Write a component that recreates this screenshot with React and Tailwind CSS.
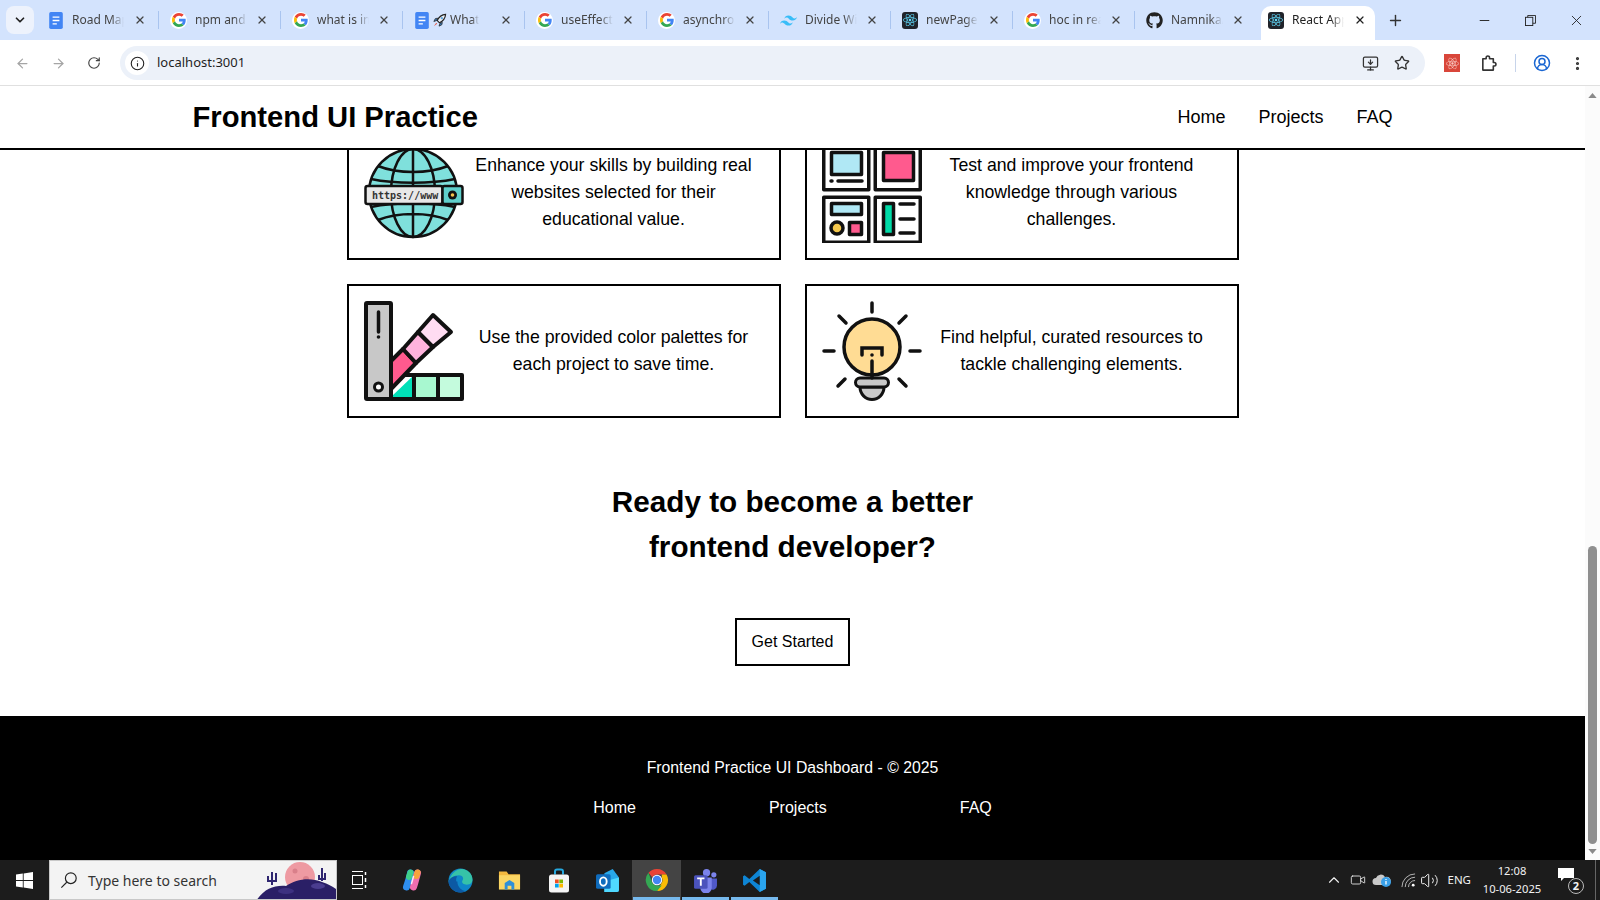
import React from "react";
import {
  ArrowLeft,
  ArrowRight,
  RotateCw,
  Info,
  Star,
  CircleUserRound,
  EllipsisVertical,
  X,
  Plus,
  Minus,
  ChevronDown,
  ChevronUp,
  Volume2,
  MonitorDown,
  Video,
} from "lucide-react";
import { FaGithub, FaReact } from "react-icons/fa";

const GoogleIcon = () => (
  <span className="w-[17px] h-[17px] rounded-full bg-white flex items-center justify-center shrink-0">
    <svg viewBox="0 0 48 48" className="w-[14px] h-[14px]">
      <path fill="#EA4335" d="M24 9.5c3.54 0 6.71 1.22 9.21 3.6l6.85-6.85C35.9 2.38 30.47 0 24 0 14.62 0 6.51 5.38 2.56 13.22l7.98 6.19C12.43 13.72 17.74 9.5 24 9.5z" />
      <path fill="#4285F4" d="M46.98 24.55c0-1.57-.15-3.09-.38-4.55H24v9.02h12.94c-.58 2.96-2.26 5.48-4.78 7.18l7.73 6c4.51-4.18 7.09-10.36 7.09-17.65z" />
      <path fill="#FBBC05" d="M10.53 28.59c-.48-1.45-.76-2.99-.76-4.59s.27-3.14.76-4.59l-7.98-6.19C.92 16.46 0 20.12 0 24c0 3.88.92 7.54 2.56 10.78l7.97-6.19z" />
      <path fill="#34A853" d="M24 48c6.48 0 11.93-2.13 15.89-5.81l-7.73-6c-2.15 1.45-4.92 2.3-8.16 2.3-6.26 0-11.57-4.22-13.47-9.91l-7.98 6.19C6.51 42.62 14.62 48 24 48z" />
    </svg>
  </span>
);

const DocsIcon = () => (
  <svg viewBox="0 0 16 20" className="w-[16px] h-[17px] shrink-0">
    <rect width="16" height="20" rx="2" fill="#4285f4" />
    <path d="M4 6h8M4 10h8M4 14h5" stroke="#fff" strokeWidth="1.6" />
  </svg>
);

const RocketIcon = () => (
  <svg viewBox="0 0 16 16" className="w-[15px] h-[15px] shrink-0 ml-[2px]">
    <path d="M14.5 1.5c-4 .3-7 2.5-9 6.5l2.5 2.5c4-2 6.2-5 6.5-9z" fill="#e8eef5" stroke="#222" strokeWidth="1.2" />
    <path d="M5 8 2 9l1.5-3L6 5.5zM8.5 11 7.5 14l3-1.5.5-2.5z" fill="#3b82c4" stroke="#222" strokeWidth=".8" />
    <path d="M4.500 10.500 2 14l3.500-2.500z" fill="#e5533d" />
    <circle cx="10.5" cy="5.5" r="1.2" fill="#5aa5e0" />
  </svg>
);

const TailwindIcon = () => (
  <svg viewBox="0 0 24 24" className="w-[17px] h-[17px] shrink-0">
    <path
      fill="#38bdf8"
      d="M12.001 4.800c-3.200 0-5.200 1.600-6 4.800 1.200-1.600 2.600-2.200 4.200-1.800.913.228 1.565.89 2.288 1.624C13.666 10.618 15.027 12 18.001 12c3.200 0 5.200-1.600 6-4.800-1.200 1.600-2.600 2.200-4.200 1.800-.913-.228-1.565-.89-2.288-1.624C16.337 6.182 14.976 4.800 12.001 4.800zm-6 7.200c-3.200 0-5.200 1.600-6 4.800 1.200-1.600 2.600-2.200 4.200-1.800.913.228 1.565.89 2.288 1.624 1.177 1.194 2.538 2.576 5.512 2.576 3.200 0 5.200-1.600 6-4.800-1.200 1.600-2.600 2.200-4.200 1.800-.913-.228-1.565-.89-2.288-1.624C10.337 13.382 8.976 12 6.001 12z"
    />
  </svg>
);

const ReactIcon = () => (
  <span className="w-[16px] h-[17px] rounded-[3px] bg-[#20232a] flex items-center justify-center shrink-0">
    <FaReact size={14} className="text-[#61dafb]" />
  </span>
);

const tabs = [
  { title: "Road Map", icon: <DocsIcon /> },
  { title: "npm and", icon: <GoogleIcon /> },
  { title: "what is in", icon: <GoogleIcon /> },
  { title: "What", icon: <DocsIcon />, rocket: true },
  { title: "useEffect", icon: <GoogleIcon /> },
  { title: "asynchron", icon: <GoogleIcon /> },
  { title: "Divide Wi", icon: <TailwindIcon /> },
  { title: "newPage", icon: <ReactIcon /> },
  { title: "hoc in rea", icon: <GoogleIcon /> },
  { title: "Namnika/", icon: <FaGithub size={17} className="text-[#222] shrink-0" />, last: true },
];

const TabStrip = () => (
  <div className="h-[40px] shrink-0 bg-[#d3e3fd] flex items-end font-['Noto_Sans',sans-serif] text-[12px] text-[#444]">
    <div className="w-[28px] h-[28px] ml-[6px] mr-[3px] mb-[6px] rounded-lg bg-[#edf2fc] flex items-center justify-center">
      <ChevronDown size={14} strokeWidth={3} className="text-[#222]" />
    </div>
    {tabs.map((tab) => (
      <div key={tab.title} className="relative w-[122px] h-[34px] pb-[6px] pl-[11px] flex items-center shrink-0">
        {tab.icon}
        {tab.rocket && <RocketIcon />}
        <span className={`${tab.rocket ? "ml-[3px] w-[29px]" : "ml-[8px] w-[52px]"} overflow-hidden whitespace-nowrap [mask-image:linear-gradient(to_right,black_75%,transparent)]`}>
          {tab.title}
        </span>
        <X size={12} strokeWidth={2.5} className="absolute left-[97px] top-[8px] text-[#444]" />
        {!tab.last && <span className="absolute right-0 top-[5px] w-[1px] h-[18px] bg-[#a9c4ef]" />}
      </div>
    ))}
    <div className="relative w-[114px] h-[34px] ml-[4px] pb-[6px] pl-[7px] flex items-center shrink-0 bg-white rounded-t-[10px] text-[#222]">
      <ReactIcon />
      <span className="ml-[8px] w-[52px] overflow-hidden whitespace-nowrap [mask-image:linear-gradient(to_right,black_75%,transparent)]">
        React App
      </span>
      <X size={12} strokeWidth={2.5} className="absolute left-[93px] top-[8px] text-[#222]" />
    </div>
    <Plus size={17} strokeWidth={2} className="ml-[12px] mb-[11px] text-[#333]" />
    <div className="ml-auto flex items-center h-[40px] text-[#222]">
      <Minus size={15} strokeWidth={1.5} className="mr-[33px]" />
      <svg viewBox="0 0 12 12" className="w-[11px] h-[11px] mr-[32px]" fill="none" stroke="currentColor">
        <rect x=".5" y="2.5" width="8" height="9" />
        <path d="M3 2.5V.5h8.500V9H8.500" />
      </svg>
      <X size={17} strokeWidth={1.25} className="mr-[15px]" />
    </div>
  </div>
);

const ExtensionIcon = () => (
  <span className="w-[16px] h-[18px] bg-[#d9463a] flex items-center justify-center">
    <FaReact size={13} className="text-[#f7c9c2]" />
  </span>
);

const PuzzleIcon = () => (
  <svg viewBox="0 0 18 18" className="ml-[20px] w-[17px] h-[17px]" fill="none" stroke="#333" strokeWidth="1.7" strokeLinejoin="round">
    <path d="M3 4h3.500V2.800a1.800 1.800 0 0 1 3.600 0V4h4v4h1a1.800 1.800 0 0 1 0 3.600h-1V16H3z" />
  </svg>
);

const Toolbar = () => (
  <div className="h-[46px] shrink-0 bg-white border-b border-[#e0e0e0] flex items-start pt-[6px] font-['Noto_Sans',sans-serif]">
    <div className="w-[120px] h-[34px] pl-[15px] flex items-center">
      <ArrowLeft size={15} strokeWidth={2} className="text-[#a5a5a5]" />
      <ArrowRight size={15} strokeWidth={2} className="ml-[21px] text-[#a5a5a5]" />
      <RotateCw size={14} strokeWidth={2} className="ml-[21px] text-[#444]" />
    </div>
    <div className="w-[1305px] h-[34px] rounded-full bg-[#ecf1f9] flex items-center pl-[5px] pr-[15px]">
      <span className="w-[24px] h-[24px] rounded-full bg-white flex items-center justify-center">
        <Info size={15} strokeWidth={1.75} className="text-[#222]" />
      </span>
      <span className="ml-[8px] text-[13px] text-[#1f1f1f]">localhost:3001</span>
      <MonitorDown size={17} strokeWidth={1.75} className="ml-auto text-[#333]" />
      <Star size={16} strokeWidth={2} className="ml-[15px] text-[#333]" />
    </div>
    <div className="h-[34px] flex items-center flex-1">
      <span className="ml-[19px]"><ExtensionIcon /></span>
      <PuzzleIcon />
      <span className="ml-[18px] w-[1px] h-[18px] bg-[#c7d4ea]" />
      <CircleUserRound size={18} strokeWidth={2} className="ml-[17px] text-[#1a66d2]" />
      <EllipsisVertical size={17} strokeWidth={2.5} className="ml-[18px] text-[#333]" />
    </div>
  </div>
);

const GlobeArt = () => (
  <svg viewBox="0 0 100 100" className="w-[100px] h-[100px] shrink-0">
    <circle cx="49" cy="50" r="44" fill="#7fe0dc" />
    <path d="M87 28a44 44 0 0 1-8 54 50 50 0 0 0 8-54z" fill="#2fb9b5" />
    <g fill="none" stroke="#111" strokeWidth="2.5">
      <circle cx="49" cy="50" r="44" />
      <ellipse cx="49" cy="50" rx="22" ry="44" />
      <path d="M49 6v88M14 23c20 8 50 8 70 0M14 77c20-8 50-8 70 0M7 36c24 5 60 5 84 0M7 64c24-5 60-5 84 0" />
    </g>
    <rect x="1.5" y="43" width="77" height="18" rx="2" fill="#e8e8e8" stroke="#111" strokeWidth="2.5" />
    <rect x="78.5" y="43" width="20" height="18" rx="2" fill="#5fd0cc" stroke="#111" strokeWidth="2.5" />
    <circle cx="88.5" cy="52" r="4.5" fill="#111" />
    <circle cx="88.5" cy="52" r="1.8" fill="#f3c24c" />
    <text x="8" y="55.500" fontFamily="'DejaVu Sans Mono', monospace" fontWeight="700" fontSize="10" fill="#333">https://www</text>
  </svg>
);

const BoardArt = () => (
  <svg viewBox="0 0 100 100" className="w-[100px] h-[100px] shrink-0">
    <g fill="#fff" stroke="#111" strokeWidth="3.5" strokeLinejoin="round">
      <rect x="1.75" y="1.75" width="45" height="45" />
      <rect x="53.25" y="1.75" width="45" height="45" />
      <rect x="1.75" y="54.25" width="45" height="45" />
      <rect x="53.25" y="54.25" width="45" height="45" />
      <rect x="9.5" y="9.5" width="30" height="22" fill="#b0e8f5" />
      <rect x="61.5" y="9.5" width="30" height="28" fill="#ff5a8e" />
      <rect x="9.5" y="60.5" width="30" height="11" fill="#b0e8f5" />
      <circle cx="15" cy="85" r="6" fill="#f5c84c" />
      <rect x="27.5" y="79.5" width="12" height="12" fill="#ff5a8e" />
      <rect x="61.5" y="60.5" width="10" height="31" fill="#00dca8" />
    </g>
    <path d="M9 38h1M16 38h24M78 61h14M78 76h14M78 90h14" stroke="#111" strokeWidth="3.5" strokeLinecap="round" />
  </svg>
);

const PaletteArt = () => (
  <svg viewBox="0 0 100 100" className="w-[100px] h-[100px] shrink-0">
    <path d="M50 74v24H27v-2z" fill="#00e0b8" />
    <g stroke="#111" strokeWidth="4" strokeLinejoin="round">
      <rect x="50" y="74" width="24" height="24" fill="#a8f8d0" />
      <rect x="74" y="74" width="24" height="24" fill="#c4fbdd" />
      <path d="M50 74H27v24h23z" fill="none" />
      <path d="M27 60 39 48 52 62 27 88z" fill="#ff5a8e" />
      <path d="M39 48 54 31 69 46 52 62z" fill="#ffb3dd" />
      <path d="M54 31 69 14 87 31 69 46z" fill="#ffdcf2" />
      <rect x="2" y="2" width="25" height="96" rx="1" fill="#c8c8c8" />
    </g>
    <path d="M14.5 11v20" stroke="#111" strokeWidth="3.5" strokeLinecap="round" />
    <circle cx="14.5" cy="36" r="1.8" fill="#111" />
    <circle cx="14.5" cy="86" r="4" fill="#fff" stroke="#111" strokeWidth="3" />
  </svg>
);

const BulbArt = () => (
  <svg viewBox="0 0 100 100" className="w-[100px] h-[100px] shrink-0">
    <path d="M38 86h24a12 12.500 0 0 1-24 0z" fill="#c8c8c8" stroke="#111" strokeWidth="3" />
    <circle cx="50" cy="46" r="28" fill="#ffdc94" stroke="#111" strokeWidth="3.5" />
    <rect x="33.5" y="77" width="33" height="9" rx="4.5" fill="#c8c8c8" stroke="#111" strokeWidth="3" />
    <path
      d="M50 2v9M2 50h10M88 50h10M17 15l7 7M84 15l-7 7M16 85l7-7M84 85l-7-7M40 54v-7h20v7M50 60v17"
      fill="none"
      stroke="#111"
      strokeWidth="3.5"
      strokeLinecap="round"
    />
    <circle cx="50" cy="54" r="1.8" fill="#111" />
  </svg>
);

const features = [
  { art: <GlobeArt />, text: "Enhance your skills by building real websites selected for their educational value.", threeLines: true },
  { art: <BoardArt />, text: "Test and improve your frontend knowledge through various challenges.", threeLines: true },
  { art: <PaletteArt />, text: "Use the provided color palettes for each project to save time." },
  { art: <BulbArt />, text: "Find helpful, curated resources to tackle challenging elements." },
];

const FeatureCard = ({ art, text, threeLines }) => (
  <div className="border-2 border-black p-[15px] flex items-center">
    {art}
    <p className={`flex-1 px-2 text-center text-[17.7px] leading-[27px] ${threeLines ? "pb-[1px]" : ""}`}>{text}</p>
  </div>
);

const Page = () => (
  <div className="flex-1 min-h-0 flex">
    <div className="flex-1 min-w-0 flex flex-col font-['Liberation_Sans',Arial,sans-serif] text-black bg-white">
      <header className="h-[64px] shrink-0 border-b-2 border-black">
        <div className="w-[1200px] h-full mx-auto flex items-center justify-between">
          <h1 className="pt-[2px] text-[29.2px] font-bold">Frontend UI Practice</h1>
          <nav className="flex gap-[33px] text-[18px]">
            <a>Home</a>
            <a>Projects</a>
            <a>FAQ</a>
          </nav>
        </div>
      </header>
      <div className="flex-1 min-h-0 overflow-hidden">
        {/* page is scrolled, first row sits partly under the header */}
        <div className="-mt-[24px] flex flex-col items-center">
          <div className="w-[892px] grid grid-cols-2 gap-[24px]">
            {features.map((f) => (
              <FeatureCard key={f.text} art={f.art} text={f.text} threeLines={f.threeLines} />
            ))}
          </div>
          <h2 className="mt-[61px] text-[29.7px] leading-[45px] font-bold text-center">
            Ready to become a better
            <br />
            frontend developer?
          </h2>
          <button className="mt-[49px] w-[115px] h-[48px] border-2 border-black text-[16px]">Get Started</button>
        </div>
        <footer className="mt-[50px] h-[144px] bg-black text-white text-[15.8px] leading-[24px] pt-[40px] flex flex-col items-center">
          <p>Frontend Practice UI Dashboard - © 2025</p>
          <div className="mt-[16px] flex gap-[133px] text-[16px]">
            <a>Home</a>
            <a>Projects</a>
            <a>FAQ</a>
          </div>
        </footer>
      </div>
    </div>
    <div className="w-[15px] shrink-0 bg-[#fbfbfb] flex flex-col items-center pt-[7px] pb-[6px]">
      <svg viewBox="0 0 10 6" className="w-[9px] h-[5px] fill-[#8a8a8a]"><path d="M5 0l5 6H0z" /></svg>
      <div className="mt-auto w-[9px] h-[298px] rounded-full bg-[#8f8f8f]" />
      <svg viewBox="0 0 10 6" className="mt-[5px] w-[9px] h-[5px] fill-[#8a8a8a]"><path d="M5 6l5-6H0z" /></svg>
    </div>
  </div>
);

const WindowsLogo = () => (
  <svg viewBox="0 0 20 20" className="w-[17px] h-[17px] fill-white">
    <path d="M0 3l8-1.100V9.500H0zM9 1.700 20 0v9.500H9zM0 10.500h8v7.600l-8-1.100zM9 10.500h11V20L9 18.300z" />
  </svg>
);

const SearchBox = () => (
  <div className="w-[288px] h-full bg-[#f3f3f3] border border-[#c8c8c8] flex items-center relative overflow-hidden">
    <svg viewBox="0 0 20 20" className="ml-[10px] w-[18px] h-[18px]" fill="none" stroke="#222" strokeWidth="1.3">
      <circle cx="12" cy="8" r="6" />
      <path d="M7.500 12.500 1.500 18.500" />
    </svg>
    <span className="ml-[10px] text-[14px] text-[#333] font-['Noto_Sans',sans-serif] whitespace-nowrap">Type here to search</span>
    <svg viewBox="0 0 80 40" className="absolute right-0 top-0 w-[80px] h-[40px]">
      <circle cx="44" cy="16" r="15" fill="#ee9aa2" />
      <circle cx="39" cy="10" r="2.5" fill="#d97f8a" />
      <circle cx="50" cy="18" r="3" fill="#d97f8a" />
      <path d="M16 24v-13M12 15v5h8v-8" stroke="#2f2670" strokeWidth="2" fill="none" />
      <path d="M66 20V7M63 14v4h6v-6" stroke="#2f2670" strokeWidth="2" fill="none" />
      <path d="M0 40c8-12 18-16 30-15 10-7 24-9 36-4 6 2 10 4 14 7v12z" fill="#2a1f66" />
      <ellipse cx="62" cy="25" rx="7" ry="3" fill="#4a3d8f" />
      <ellipse cx="30" cy="30" rx="8" ry="3" fill="#3d3180" />
    </svg>
  </div>
);

const ChromeLogo = () => (
  <svg viewBox="0 0 24 24" className="w-[24px] h-[24px]">
    <path d="M12 1a11 11 0 0 1 9.530 5.500H12a5.500 5.500 0 0 0-4.760 2.750L3.500 4.800A11 11 0 0 1 12 1z" fill="#ea4335" />
    <path d="M21.530 6.500A11 11 0 0 1 12 23l4.760-8.250A5.500 5.500 0 0 0 16.760 9.250L16.760 6.500z" fill="#fbbc05" />
    <path d="M12 23A11 11 0 0 1 3.500 4.800l3.740 9.950A5.500 5.500 0 0 0 12 17.500h4.760L12 23z" fill="#34a853" />
    <circle cx="12" cy="12" r="5.2" fill="#fff" />
    <circle cx="12" cy="12" r="4.2" fill="#4285f4" />
  </svg>
);

const CopilotLogo = () => (
  <svg viewBox="0 0 24 24" className="w-[24px] h-[24px]" fill="none" strokeLinecap="round">
    <defs>
      <linearGradient id="copLeft" x1="0" y1="0" x2="0" y2="1">
        <stop offset="0" stopColor="#3fd08a" />
        <stop offset="0.5" stopColor="#2e8ef0" />
        <stop offset="1" stopColor="#2266d8" />
      </linearGradient>
      <linearGradient id="copRight" x1="0" y1="0" x2="0" y2="1">
        <stop offset="0" stopColor="#f6a33c" />
        <stop offset="0.5" stopColor="#ef6db0" />
        <stop offset="1" stopColor="#b45ce0" />
      </linearGradient>
    </defs>
    <path d="M10.500 5C10 9 8 14 6.500 19" stroke="#2e8ef0" strokeWidth="7" />
    <path d="M10.500 4.500 9 9" stroke="#3fd08a" strokeWidth="6" />
    <path d="M17.500 5C16 10 15 15 13.500 19" stroke="#ef6db0" strokeWidth="7" />
    <path d="M17.500 4.500 16.500 8" stroke="#f6a33c" strokeWidth="6" />
    <path d="M13.500 8.500 11.500 15.500" stroke="#fbe9f2" strokeWidth="1.5" />
  </svg>
);

const taskIcons = [
  { key: "copilot", node: <CopilotLogo /> },
  {
    key: "edge",
    node: (
      <svg viewBox="0 0 24 24" className="w-[25px] h-[25px]">
        <circle cx="12" cy="12" r="11.5" fill="#0f87c9" />
        <path d="M1 13C2 6 8 1 13 1c6 0 10.500 5 10.500 10 0 3-2 5-5.500 5-3 0-4.500-1.500-4.500-3 0-1 1-1.500 1-3 0-2-2-3-4-3-5 0-9 3-10 6z" fill="#36c2a8" />
        <path d="M9 13c0 5 4 9 8 9l2-.8A11.500 11.500 0 0 1 12 23.500C5 23.500.5 18 .5 13 2 9 6 7.500 9 8c-1 1-1.500 3-1 5z" fill="#0c59a4" />
      </svg>
    ),
  },
  {
    key: "files",
    node: (
      <svg viewBox="0 0 24 24" className="w-[23px] h-[24px]">
        <path d="M1 3h8l2 3h12v15H1z" fill="#f4b93f" />
        <rect x="1" y="7" width="22" height="15" fill="#fbd664" />
        <path d="M7 22v-7l5-3 5 3v7h-3v-4h-4v4z" fill="#2f8fd8" />
      </svg>
    ),
  },
  {
    key: "store",
    node: (
      <svg viewBox="0 0 24 24" className="w-[24px] h-[25px]">
        <path d="M8 6V3a2 2 0 0 1 2-2h4a2 2 0 0 1 2 2v3" fill="none" stroke="#25a9e0" strokeWidth="2" />
        <rect x="2" y="6" width="20" height="18" rx="2.5" fill="#f5f5f5" />
        <rect x="8" y="11" width="3.7" height="3.7" fill="#f25022" />
        <rect x="12.3" y="11" width="3.7" height="3.7" fill="#7fba00" />
        <rect x="8" y="15.3" width="3.7" height="3.7" fill="#00a4ef" />
        <rect x="12.3" y="15.3" width="3.7" height="3.7" fill="#ffb900" />
      </svg>
    ),
  },
  {
    key: "outlook",
    node: (
      <svg viewBox="0 0 24 24" className="w-[25px] h-[25px]">
        <path d="M9 5l8-4 6 8v12a2 2 0 0 1-2 2H9z" fill="#28a8ea" />
        <path d="M9 13l14-4v12a2 2 0 0 1-2 2H9z" fill="#50d9ff" />
        <rect x="1" y="6" width="14" height="14" rx="1.5" fill="#0f6cbd" />
        <ellipse cx="8" cy="13" rx="3.2" ry="4" fill="none" stroke="#fff" strokeWidth="1.8" />
      </svg>
    ),
  },
  { key: "chrome", node: <ChromeLogo />, active: true, open: true },
  {
    key: "teams",
    node: (
      <svg viewBox="0 0 24 24" className="w-[25px] h-[25px]">
        <circle cx="20" cy="6.5" r="2.5" fill="#7b83eb" />
        <circle cx="13" cy="4.5" r="3.5" fill="#7b83eb" />
        <path d="M16 10h7v7a4 4 0 0 1-7 2.500z" fill="#5059c9" />
        <path d="M7 9h11v10a5 5 0 0 1-11 0z" fill="#7b83eb" />
        <rect x="1" y="7" width="13" height="13" rx="1.5" fill="#4b53bc" />
        <path d="M4 10h7M7.500 10v7" stroke="#fff" strokeWidth="1.8" />
      </svg>
    ),
    open: true,
  },
  {
    key: "vscode",
    node: (
      <svg viewBox="0 0 24 24" className="w-[25px] h-[25px]">
        <path d="M17 1l6 3v16l-6 3-10-9.500L2.500 17 1 16v-8l1.500-1L7 10.500z" fill="#0e85d4" />
        <path d="M17 1l6 3v16l-6 3z" fill="#2aa4ee" />
        <path d="M17 7.500 10.500 12l6.500 4.500z" fill="#1c1c1c" />
      </svg>
    ),
    open: true,
  },
];

const Taskbar = () => (
  <div className="h-[40px] shrink-0 bg-[#1c1c1c] flex items-center text-white font-['Noto_Sans',sans-serif]">
    <div className="w-[49px] flex justify-center">
      <WindowsLogo />
    </div>
    <SearchBox />
    <div className="w-[45px] flex justify-center">
      <svg viewBox="0 0 16 18" className="w-[16px] h-[18px]" fill="none" stroke="#fff" strokeWidth="1">
        <path d="M0 .500h11M0 17.500h11" />
        <rect x=".5" y="4.5" width="10" height="9" />
        <path d="M13.500 1v3M13.500 7v4M13.500 14v3" strokeWidth="1.5" />
      </svg>
    </div>
    <div className="flex h-full ml-[5px]">
      {taskIcons.map((item) => (
        <div
          key={item.key}
          className={`relative w-[49px] h-full flex items-center justify-center ${item.active ? "bg-[#444]" : ""}`}
        >
          {item.node}
          {item.open && <span className="absolute bottom-0 inset-x-[1px] h-[3px] bg-[#76b9ed]" />}
        </div>
      ))}
    </div>
    <div className="ml-auto flex items-center h-full text-[#f2f2f2]">
      <ChevronUp size={18} strokeWidth={1.5} />
      <Video size={16} strokeWidth={1.25} className="ml-[7px]" />
      <svg viewBox="0 0 20 16" className="ml-[6px] w-[20px] h-[16px]">
        <path d="M4 13a3.500 3.500 0 0 1 0-7 5 5 0 0 1 9-1 4 4 0 0 1 3 8z" fill="#c9c9c9" />
        <circle cx="14" cy="10" r="5" fill="#3aa0e8" />
        <path d="M14 9v3.500M14 7v1" stroke="#fff" strokeWidth="1.3" />
      </svg>
      <svg viewBox="0 0 16 16" className="ml-[9px] w-[15px] h-[15px]" fill="none" stroke="#bdbdbd" strokeWidth="1">
        <path d="M1 15A14 14 0 0 1 15 1M4.500 15A10.500 10.500 0 0 1 15 4.500M8 15a7 7 0 0 1 7-7" />
        <circle cx="13" cy="13" r="1.5" fill="#fff" stroke="none" />
      </svg>
      <Volume2 size={19} strokeWidth={1.25} className="ml-[4px]" />
      <span className="ml-[8px] text-[11.5px]">ENG</span>
      <div className="ml-[3px] w-[76px] text-center text-[11.2px] leading-[18px]">
        <div>12:08</div>
        <div>10-06-2025</div>
      </div>
      <div className="relative ml-[8px] w-[24px] h-[24px]">
        <svg viewBox="0 0 16 14" className="w-[16px] h-[14px] absolute left-0 top-0" fill="#fff">
          <path d="M0 0h16v10H6l-3 3v-3H0z" />
        </svg>
        <span className="absolute right-[-2px] bottom-[-2px] w-[16px] h-[16px] rounded-full border border-[#bbb] bg-[#1c1c1c] text-[11px] font-bold leading-[14px] text-center">
          2
        </span>
      </div>
      <span className="ml-[13px] w-[1px] h-full bg-[#666]" />
      <span className="w-[4px]" />
    </div>
  </div>
);

export default function App() {
  return (
    <div className="w-screen h-screen overflow-hidden flex flex-col">
      <TabStrip />
      <Toolbar />
      <Page />
      <Taskbar />
    </div>
  );
}
